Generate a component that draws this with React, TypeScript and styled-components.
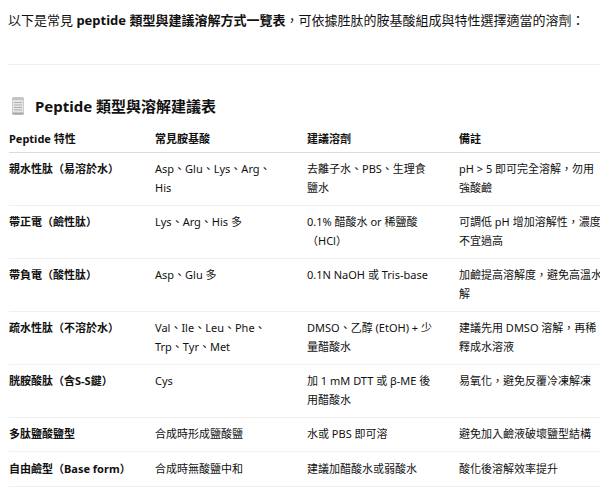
import { FC } from "react";
import styled, { createGlobalStyle } from "styled-components";

const GlobalStyle = createGlobalStyle`
	html, body {
		margin: 0;
		padding: 0;
		background: #ffffff;
		overflow-x: hidden;
	}
	body {
		font-family: "Noto Sans", "Noto Sans CJK TC", sans-serif;
		color: #111111;
	}
`;

type Row = {
	kind: string;
	amino: string;
	solvent: string;
	note: string;
};

const rows: Row[] = [
	{
		kind: "親水性肽（易溶於水）",
		amino: "Asp、Glu、Lys、Arg、His",
		solvent: "去離子水、PBS、生理食鹽水",
		note: "pH > 5 即可完全溶解，勿用強酸鹼",
	},
	{
		kind: "帶正電（鹼性肽）",
		amino: "Lys、Arg、His 多",
		solvent: "0.1% 醋酸水 or 稀鹽酸（HCl）",
		note: "可調低 pH 增加溶解性，濃度不宜過高",
	},
	{
		kind: "帶負電（酸性肽）",
		amino: "Asp、Glu 多",
		solvent: "0.1N NaOH 或 Tris-base",
		note: "加鹼提高溶解度，避免高溫水解",
	},
	{
		kind: "疏水性肽（不溶於水）",
		amino: "Val、Ile、Leu、Phe、Trp、Tyr、Met",
		solvent: "DMSO、乙醇 (EtOH) + 少量醋酸水",
		note: "建議先用 DMSO 溶解，再稀釋成水溶液",
	},
	{
		kind: "胱胺酸肽（含S-S鍵）",
		amino: "Cys",
		solvent: "加 1 mM DTT 或 β-ME 後用醋酸水",
		note: "易氧化，避免反覆冷凍解凍",
	},
	{
		kind: "多肽鹽酸鹽型",
		amino: "合成時形成鹽酸鹽",
		solvent: "水或 PBS 即可溶",
		note: "避免加入鹼液破壞鹽型結構",
	},
	{
		kind: "自由鹼型（Base form）",
		amino: "合成時無酸鹽中和",
		solvent: "建議加醋酸水或弱酸水",
		note: "酸化後溶解效率提升",
	},
];

const NoteIcon: FC = () => (
	<svg width="12" height="18" viewBox="0 0 12 18" aria-hidden="true">
		<rect x="0.5" y="0.5" width="11" height="17" rx="1" fill="#e6e6e6" stroke="#cccccc" />
		<rect x="0.5" y="0.5" width="11" height="2.5" fill="#c2c2c2" />
		<rect x="2" y="5" width="8" height="1" fill="#b0b0b0" />
		<rect x="2" y="7.5" width="8" height="1" fill="#b0b0b0" />
		<rect x="2" y="10" width="8" height="1" fill="#b0b0b0" />
		<rect x="2" y="12.5" width="8" height="1" fill="#b0b0b0" />
		<rect x="0.5" y="15.5" width="11" height="2" fill="#a6a6a6" />
	</svg>
);

const App: FC = () => {
	return (
		<>
			<GlobalStyle />
			<Page>
				<Intro>
					以下是常見 <strong>peptide 類型與建議溶解方式一覽表</strong>，可依據胜肽的胺基酸組成與特性選擇適當的溶劑：
				</Intro>
				<Divider />
				<Heading>
					<NoteIcon />
					<span>Peptide 類型與溶解建議表</span>
				</Heading>
				<TableWrap>
					<Table>
						<colgroup>
							<col style={{ width: 146 }} />
							<col style={{ width: 152 }} />
							<col style={{ width: 152 }} />
							<col style={{ width: 160 }} />
						</colgroup>
						<thead>
							<tr>
								<Th>Peptide 特性</Th>
								<Th>常見胺基酸</Th>
								<Th>建議溶劑</Th>
								<Th $last>備註</Th>
							</tr>
						</thead>
						<tbody>
							{rows.map((row) => (
								<tr key={row.kind}>
									<Td $bold>{row.kind}</Td>
									<Td>{row.amino}</Td>
									<Td>{row.solvent}</Td>
									<Td $last>{row.note}</Td>
								</tr>
							))}
						</tbody>
					</Table>
				</TableWrap>
			</Page>
		</>
	);
};

export default App;

const Page = styled.div`
	padding: 10px 0 0 8px;
	width: 592px;
	overflow: hidden;
`;

const Intro = styled.p`
	margin: 0;
	font-size: 13px;
	line-height: 20px;
	white-space: nowrap;

	strong {
		font-weight: 700;
	}
`;

const Divider = styled.hr`
	margin: 34px 0 0;
	border: none;
	height: 1px;
	background: #efefef;
`;

const Heading = styled.h3`
	margin: 30px 0 4px;
	display: flex;
	align-items: center;
	gap: 11px;
	padding-left: 4px;
	font-size: 15px;
	line-height: 22px;
	font-weight: 700;
`;

const TableWrap = styled.div`
	width: 610px;
	padding-left: 1px;
`;

const Table = styled.table`
	table-layout: fixed;
	width: 610px;
	border-collapse: collapse;
	font-size: 11px;
	line-height: 18.5px;
`;

const Th = styled.th<{ $last?: boolean }>`
	text-align: left;
	font-weight: 700;
	padding: 9px ${(p) => (p.$last ? "14px" : "26px")} 3px 0;
	border-bottom: 1px solid #dcdcdc;
	vertical-align: bottom;
`;

const Td = styled.td<{ $bold?: boolean; $last?: boolean }>`
	padding: 7.5px ${(p) => (p.$last ? "14px" : "26px")} 7.5px 0;
	border-bottom: 1px solid #f0f0f0;
	vertical-align: top;
	font-weight: ${(p) => (p.$bold ? 700 : 400)};
`;
